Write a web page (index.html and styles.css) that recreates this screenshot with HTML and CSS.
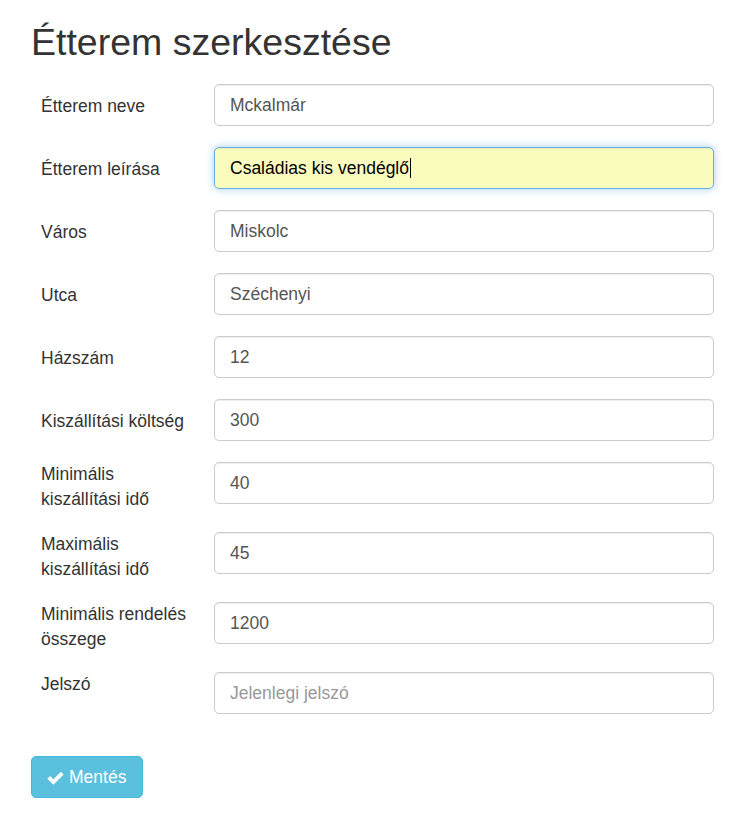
FILE: index.html
```html
<!DOCTYPE html>
<html lang="hu">
<head>
<meta charset="utf-8">
<title>Étterem szerkesztése</title>
<link rel="stylesheet" href="styles.css">
</head>
<body>
<div class="page">
  <h2 class="title">Étterem szerkesztése</h2>
  <form class="form">
    <div class="row">
      <label class="label">Étterem neve</label>
      <input class="field" type="text" value="Mckalmár">
    </div>
    <div class="row">
      <label class="label">Étterem leírása</label>
      <div class="field field-focus">Családias kis vendéglő<span class="caret"></span></div>
    </div>
    <div class="row">
      <label class="label">Város</label>
      <input class="field" type="text" value="Miskolc">
    </div>
    <div class="row">
      <label class="label">Utca</label>
      <input class="field" type="text" value="Széchenyi">
    </div>
    <div class="row">
      <label class="label">Házszám</label>
      <input class="field" type="text" value="12">
    </div>
    <div class="row">
      <label class="label">Kiszállítási költség</label>
      <input class="field" type="text" value="300">
    </div>
    <div class="row">
      <label class="label label-top">Minimális<br>kiszállítási idő</label>
      <input class="field" type="text" value="40">
    </div>
    <div class="row">
      <label class="label label-top">Maximális<br>kiszállítási idő</label>
      <input class="field" type="text" value="45">
    </div>
    <div class="row">
      <label class="label label-top">Minimális rendelés<br>összege</label>
      <input class="field" type="text" value="1200">
    </div>
    <div class="row">
      <label class="label label-top">Jelszó</label>
      <input class="field" type="password" placeholder="Jelenlegi jelszó">
    </div>
    <button class="btn" type="button"><svg class="icon" viewBox="0 0 16 13" width="17" height="14"><path d="M0.3 7.1 L2.9 4.5 L6 7.6 L13.1 0.5 L15.7 3.1 L6 12.8 Z" fill="#fff"/></svg>Mentés</button>
  </form>
</div>
</body>
</html>
```

FILE: styles.css
```css
* { box-sizing: border-box; }
html, body { margin: 0; padding: 0; background: #fff; }
body {
  font-family: "Liberation Sans", Arial, sans-serif;
  font-size: 17.5px;
  color: #333;
}
.page {
  padding: 0 0 0 31px;
  width: 714px;
}
.title {
  font-size: 37.5px;
  font-weight: 500;
  line-height: 41.25px;
  margin: 22px 0 21px 0;
}
.form {
  display: flex;
  flex-direction: column;
}
.row {
  display: flex;
  align-items: flex-start;
  margin-bottom: 21px;
  padding-left: 10px;
}
.label {
  width: 173px;
  flex: none;
  line-height: 24.5px;
  padding-top: 9.5px;
}
.label-top { padding-top: 0; }
.field {
  width: 500px;
  height: 42px;
  flex: none;
  font-family: "Liberation Sans", Arial, sans-serif;
  font-size: 17.5px;
  color: #555;
  background: #fff;
  border: 1px solid #ccc;
  border-radius: 5px;
  padding: 0 15px;
  box-shadow: inset 0 1px 1px rgba(0,0,0,.075);
  outline: none;
  margin: 0;
}
.field::placeholder { color: #999; }
.field-focus {
  display: flex;
  align-items: center;
  color: #000;
  background: #fafcbe;
  border-color: #66afe9;
  box-shadow: inset 0 1px 1px rgba(0,0,0,.075), 0 0 8px rgba(102,175,233,.6);
}
.caret {
  display: inline-block;
  width: 1px;
  height: 20px;
  background: #000;
  margin-left: 1px;
}
.btn {
  align-self: flex-start;
  margin-top: 21px;
  display: inline-flex;
  align-items: center;
  height: 42px;
  padding: 0 16px 0 15px;
  background: #5bc0de;
  border: 1px solid #46b8da;
  border-radius: 5px;
  color: #fff;
  font-family: "Liberation Sans", Arial, sans-serif;
  font-size: 17.5px;
  cursor: pointer;
}
.icon {
  margin-right: 5px;
  margin-top: 1px;
}
```
